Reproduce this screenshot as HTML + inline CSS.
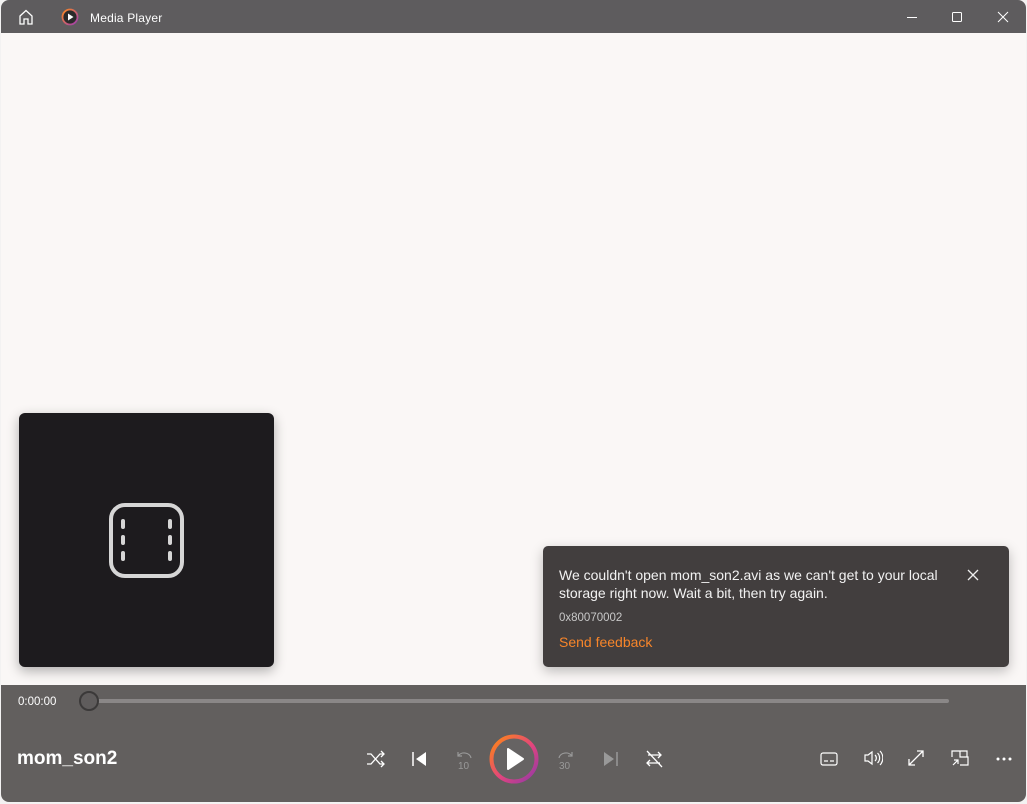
<!DOCTYPE html>
<html><head><meta charset="utf-8"><style>
*{margin:0;padding:0;box-sizing:border-box}
body{width:1027px;height:804px;overflow:hidden;background:#f3f2f2;font-family:"Liberation Sans",sans-serif;position:relative}
.win{position:absolute;left:1px;top:0;width:1025px;height:802px;background:#faf7f6;border-radius:8px 8px 8px 8px;overflow:hidden}
.title{position:absolute;left:0;top:0;width:100%;height:33px;background:#5e5c5e;color:#fff;font-size:12px}
.ctrl{position:absolute;left:0;top:685px;width:100%;height:117px;background:#625f5e}
svg{position:absolute}
.t{position:absolute;color:#fff}
</style></head><body>
<div class="win">
<div class="title">
<svg style="left:16px;top:8px" width="18" height="18" viewBox="0 0 18 18" fill="none" stroke="#fff" stroke-width="1.3"><path d="M3 8L9 2.5 15 8V16H11V11H7V16H3Z"/></svg>
<svg style="left:60px;top:8px" width="18" height="18" viewBox="0 0 18 18"><defs><linearGradient id="g0" x1="0" y1="0" x2="1" y2="1"><stop offset="0" stop-color="#ff8a1e"/><stop offset="1" stop-color="#9b3bb3"/></linearGradient></defs><circle cx="9" cy="9" r="7.5" fill="#2a2a2a" stroke="url(#g0)" stroke-width="1.8"/><path d="M7 5.5L12.5 9 7 12.5Z" fill="#fff"/></svg>
<div class="t" style="left:89px;top:11px;font-size:12px;letter-spacing:0.2px">Media Player</div>
<svg style="left:905px;top:11px" width="12" height="12" stroke="#fff" stroke-width="1"><path d="M1 6.5H11"/></svg>
<svg style="left:950px;top:11px" width="12" height="12" fill="none" stroke="#fff" stroke-width="1"><rect x="1.5" y="1.5" width="9" height="9" rx="1"/></svg>
<svg style="left:996px;top:11px" width="12" height="12" stroke="#fff" stroke-width="1"><path d="M1 1L11 11M11 1L1 11"/></svg>
</div>

<div style="position:absolute;left:18px;top:413px;width:255px;height:254px;background:#1d1b1e;border-radius:6px;box-shadow:0 4px 12px rgba(0,0,0,.3)">
<svg style="left:89px;top:89px" width="77" height="77" viewBox="0 0 77 77" fill="none" stroke="#d6d6d6" stroke-width="4" stroke-linecap="round"><rect x="3" y="3" width="71" height="71" rx="14"/><path d="M15 19v6M15 35v6M15 51v6M62 19v6M62 35v6M62 51v6"/></svg>
</div>

<div style="position:absolute;left:542px;top:546px;width:466px;height:121px;background:#423e3e;border-radius:5px;box-shadow:0 4px 12px rgba(0,0,0,.25)">
<div class="t" style="left:16px;top:20px;font-size:14px;line-height:18px;color:#f2f2f2">We couldn't open mom_son2.avi as we can't get to your local<br>storage right now. Wait a bit, then try again.</div>
<div class="t" style="left:16px;top:66px;font-size:11.5px;color:#c8c8c8">0x80070002</div>
<div class="t" style="left:16px;top:88px;font-size:14px;color:#f7852a">Send feedback</div>
<svg style="left:423px;top:22px" width="14" height="14" stroke="#eee" stroke-width="1.3"><path d="M2 2L12 12M12 2L2 12"/></svg>
</div>

<div class="ctrl">
<div class="t" style="left:17px;top:11px;font-size:11.5px">0:00:00</div>
<div style="position:absolute;left:88px;top:14px;width:860px;height:4px;background:#8a8787;border-radius:2px"></div>
<div style="position:absolute;left:78px;top:6px;width:20px;height:20px;border-radius:50%;background:#5f5c5c;border:2px solid #3b3939"></div>
<div class="t" style="left:16px;top:63px;font-size:19px;font-weight:bold">mom_son2</div>
<svg style="left:364px;top:64px" width="22" height="20" viewBox="0 0 22 20" fill="none" stroke="#fff" stroke-width="1.3"><path d="M2 5h4l9 10h4M2 15h4l9-10h4M16 2l3 3-3 3M16 12l3 3-3 3"/></svg>
<svg style="left:410px;top:64px" width="18" height="20" viewBox="0 0 18 20"><path d="M2 3v14" stroke="#fff" stroke-width="1.5"/><path d="M15 3v14L5 10Z" fill="#fff"/></svg>
<svg style="left:453px;top:62px" width="20" height="24" viewBox="0 0 20 24" fill="none" stroke="#999" stroke-width="1.2"><path d="M4 9a7 6 0 0 1 13 2M4 5v4h4"/><text x="4" y="22" font-size="10" fill="#999" stroke="none" font-family="Liberation Sans">10</text></svg>
<svg style="left:488px;top:733px;position:fixed" width="52" height="52" viewBox="0 0 52 52"><defs><linearGradient id="g1" x1="0" y1="0" x2="1" y2="1"><stop offset="0" stop-color="#ff8a10"/><stop offset=".55" stop-color="#e2447e"/><stop offset="1" stop-color="#8f39a8"/></linearGradient></defs><circle cx="26" cy="26" r="22.5" fill="#666363" stroke="url(#g1)" stroke-width="4"/><path d="M20 16L35 26 20 36Z" fill="#fff" stroke="#fff" stroke-width="2" stroke-linejoin="round"/></svg>
<svg style="left:555px;top:62px" width="20" height="24" viewBox="0 0 20 24" fill="none" stroke="#999" stroke-width="1.2"><path d="M16 9a7 6 0 0 0 -13 2M16 5v4h-4"/><text x="3" y="22" font-size="10" fill="#999" stroke="none" font-family="Liberation Sans">30</text></svg>
<svg style="left:600px;top:64px" width="18" height="20" viewBox="0 0 18 20"><path d="M16 3v14" stroke="#999" stroke-width="1.5"/><path d="M3 3v14l10-7Z" fill="#999"/></svg>
<svg style="left:643px;top:63px" width="20" height="22" viewBox="0 0 20 22" fill="none" stroke="#fff" stroke-width="1.3"><path d="M4 7h13M14 4l3 3-3 3M16 15H3M6 12l-3 3 3 3M3 3l15 16"/></svg>
<svg style="left:819px;top:66px" width="18" height="16" viewBox="0 0 18 16" fill="none" stroke="#fff" stroke-width="1.2"><rect x="1" y="2" width="16" height="12" rx="2"/><path d="M4 10h4M10 10h4"/></svg>
<svg style="left:862px;top:64px" width="20" height="18" viewBox="0 0 20 18" fill="none" stroke="#fff" stroke-width="1.2"><path d="M2 6h3l4-3v12l-4-3H2Z"/><path d="M12 6a4 4 0 0 1 0 6M14.5 4a7 7 0 0 1 0 10M17 2a10 10 0 0 1 0 14"/></svg>
<svg style="left:906px;top:64px" width="18" height="18" viewBox="0 0 18 18" fill="none" stroke="#fff" stroke-width="1.3"><path d="M2 16L16 2M10 2h6v6M2 10v6h6"/></svg>
<svg style="left:950px;top:64px" width="18" height="18" viewBox="0 0 18 18" fill="none" stroke="#fff" stroke-width="1.2"><path d="M1 8V2h8v6h8v8h-8M9 2h7v6M2 16l5-5M3 11h4v4"/></svg>
<svg style="left:995px;top:72px" width="18" height="4"><circle cx="2" cy="2" r="1.5" fill="#fff"/><circle cx="8" cy="2" r="1.5" fill="#fff"/><circle cx="14" cy="2" r="1.5" fill="#fff"/></svg>
</div>
</div>
</body></html>
